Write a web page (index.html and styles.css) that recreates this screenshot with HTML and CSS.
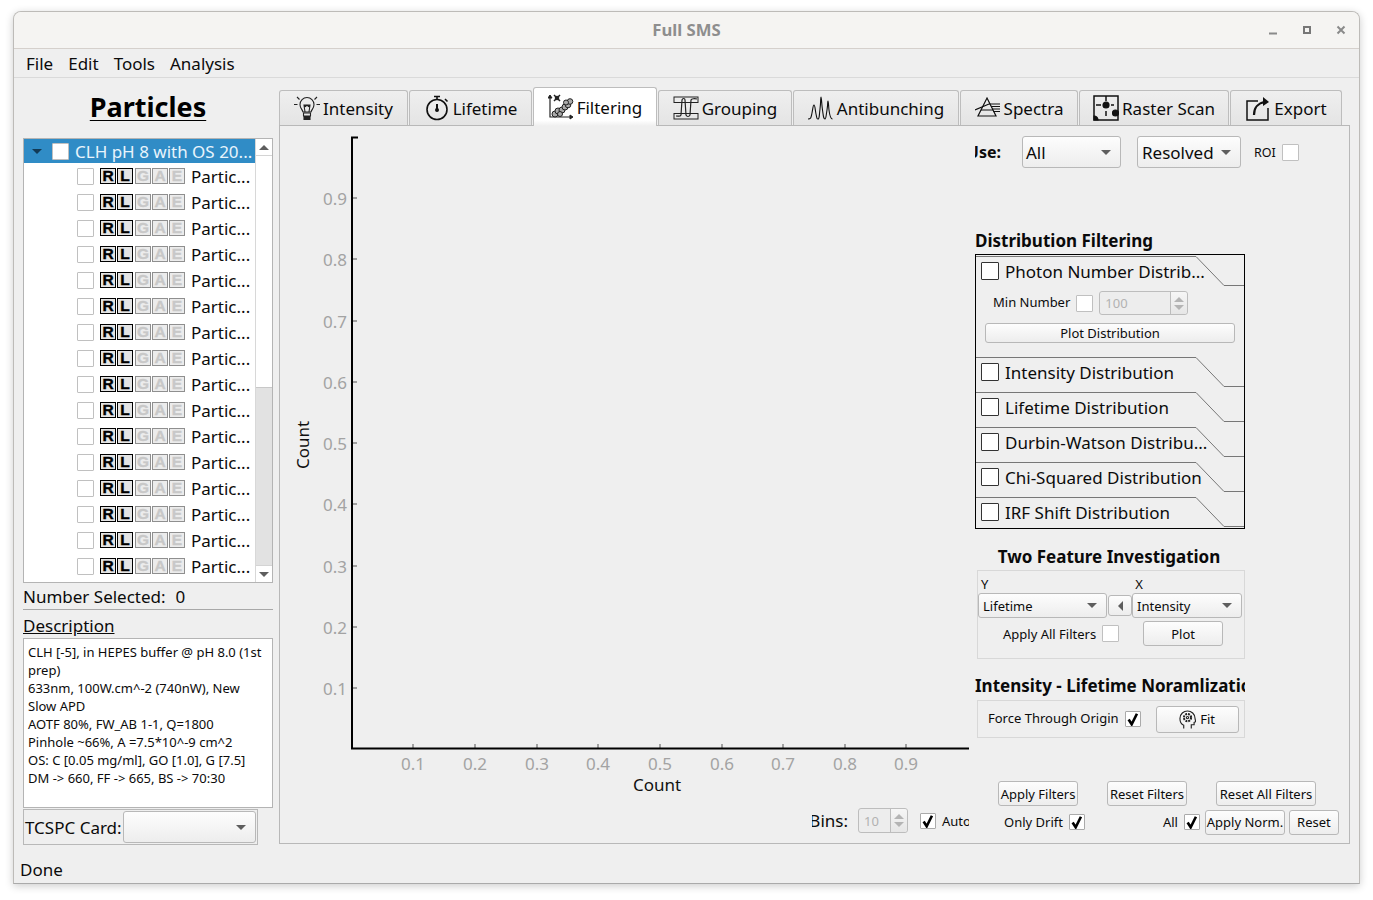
FILE: index.html
```html
<!DOCTYPE html>
<html lang="en">
<head>
  <meta charset="UTF-8">
  <title>Full SMS</title>
  <link rel="stylesheet" href="styles.css">
</head>
<body>
<div class="window">
  <div class="titlebar">
    <span class="title">Full SMS</span>
    <div class="win-btns">
      <svg viewBox="0 0 10 10"><path d="M1 8.500h8" stroke="#8a8a8a" stroke-width="2"/></svg>
      <svg viewBox="0 0 10 10"><rect x="2" y="2" width="6" height="6" fill="none" stroke="#777" stroke-width="2"/></svg>
      <svg viewBox="0 0 10 10"><path d="M1.500 1.500l7 7M8.500 1.500l-7 7" stroke="#8a8a8a" stroke-width="2"/></svg>
    </div>
  </div>
  <div class="menubar">
    <span>File</span><span>Edit</span><span>Tools</span><span>Analysis</span>
  </div>
  <div class="main">
    <!-- Particle list -->
    <div class="left">
      <h1 class="particles">Particles</h1>
      <div class="tree">
        <div class="tree-list">
          <div class="tree-head">
            <span class="caret-dark"></span>
            <span class="chk head-chk"></span>
            <span class="head-text">CLH pH 8 with OS 20...</span>
          </div>
          <div class="tree-row"><span class="chk"></span><span class="bd">R</span><span class="bd">L</span><span class="bd off">G</span><span class="bd off">A</span><span class="bd off">E</span><span class="row-text">Partic...</span></div>
          <div class="tree-row"><span class="chk"></span><span class="bd">R</span><span class="bd">L</span><span class="bd off">G</span><span class="bd off">A</span><span class="bd off">E</span><span class="row-text">Partic...</span></div>
          <div class="tree-row"><span class="chk"></span><span class="bd">R</span><span class="bd">L</span><span class="bd off">G</span><span class="bd off">A</span><span class="bd off">E</span><span class="row-text">Partic...</span></div>
          <div class="tree-row"><span class="chk"></span><span class="bd">R</span><span class="bd">L</span><span class="bd off">G</span><span class="bd off">A</span><span class="bd off">E</span><span class="row-text">Partic...</span></div>
          <div class="tree-row"><span class="chk"></span><span class="bd">R</span><span class="bd">L</span><span class="bd off">G</span><span class="bd off">A</span><span class="bd off">E</span><span class="row-text">Partic...</span></div>
          <div class="tree-row"><span class="chk"></span><span class="bd">R</span><span class="bd">L</span><span class="bd off">G</span><span class="bd off">A</span><span class="bd off">E</span><span class="row-text">Partic...</span></div>
          <div class="tree-row"><span class="chk"></span><span class="bd">R</span><span class="bd">L</span><span class="bd off">G</span><span class="bd off">A</span><span class="bd off">E</span><span class="row-text">Partic...</span></div>
          <div class="tree-row"><span class="chk"></span><span class="bd">R</span><span class="bd">L</span><span class="bd off">G</span><span class="bd off">A</span><span class="bd off">E</span><span class="row-text">Partic...</span></div>
          <div class="tree-row"><span class="chk"></span><span class="bd">R</span><span class="bd">L</span><span class="bd off">G</span><span class="bd off">A</span><span class="bd off">E</span><span class="row-text">Partic...</span></div>
          <div class="tree-row"><span class="chk"></span><span class="bd">R</span><span class="bd">L</span><span class="bd off">G</span><span class="bd off">A</span><span class="bd off">E</span><span class="row-text">Partic...</span></div>
          <div class="tree-row"><span class="chk"></span><span class="bd">R</span><span class="bd">L</span><span class="bd off">G</span><span class="bd off">A</span><span class="bd off">E</span><span class="row-text">Partic...</span></div>
          <div class="tree-row"><span class="chk"></span><span class="bd">R</span><span class="bd">L</span><span class="bd off">G</span><span class="bd off">A</span><span class="bd off">E</span><span class="row-text">Partic...</span></div>
          <div class="tree-row"><span class="chk"></span><span class="bd">R</span><span class="bd">L</span><span class="bd off">G</span><span class="bd off">A</span><span class="bd off">E</span><span class="row-text">Partic...</span></div>
          <div class="tree-row"><span class="chk"></span><span class="bd">R</span><span class="bd">L</span><span class="bd off">G</span><span class="bd off">A</span><span class="bd off">E</span><span class="row-text">Partic...</span></div>
          <div class="tree-row"><span class="chk"></span><span class="bd">R</span><span class="bd">L</span><span class="bd off">G</span><span class="bd off">A</span><span class="bd off">E</span><span class="row-text">Partic...</span></div>
          <div class="tree-row"><span class="chk"></span><span class="bd">R</span><span class="bd">L</span><span class="bd off">G</span><span class="bd off">A</span><span class="bd off">E</span><span class="row-text">Partic...</span></div>
        </div>
        <div class="vscroll">
          <div class="sb-btn"><span class="caret-up"></span></div>
          <div class="sb-track"></div>
          <div class="sb-thumb"></div>
          <div class="sb-btn sb-btn-low"><span class="caret"></span></div>
        </div>
      </div>
      <div class="selected"><span>Number Selected:</span><span>0</span></div>
      <div class="rule"></div>
      <div class="desc-label">Description</div>
      <div class="desc">CLH [-5], in HEPES buffer @ pH 8.0 (1st prep)<br>633nm, 100W.cm^-2 (740nW), New Slow APD<br>AOTF 80%, FW_AB 1-1, Q=1800<br>Pinhole ~66%, A =7.5*10^-9 cm^2<br>OS: C [0.05 mg/ml], GO [1.0], G [7.5]<br>DM -&gt; 660, FF -&gt; 665, BS -&gt; 70:30</div>
      <div class="tcspc">
        <span>TCSPC Card:</span>
        <div class="combo tcspc-combo"><span></span><i class="caret"></i></div>
      </div>
    </div>

    <!-- Tabs -->
    <div class="right">
      <div class="tabs">
        <div class="tab t-int">
          <svg class="ico" viewBox="0 0 26 26" fill="none" stroke="#222" stroke-width="1.100"><path d="M9 17c-1-3-3-4-3-7.500a7 7 0 0 1 14 0c0 3.500-2 4.500-3 7.500z"/><path d="M11 17l-1-7h6l-1 7M10 10l1.500 1.500L13 10l1.500 1.500L16 10"/><path d="M9.500 18h7v3h-7z"/><path d="M10 21.500h6v3h-6z" fill="#222"/><path d="M0 9.500h3.500M22.500 9.500H26M3 2l2.500 2.500M23 2l-2.500 2.500"/></svg>
          <span>Intensity</span>
        </div>
        <div class="tab t-life">
          <svg class="ico" viewBox="0 0 26 26" fill="none" stroke="#111" stroke-width="1.600"><circle cx="13" cy="14.500" r="10"/><path d="M10 1.500h6M13 1.500v3M21 4l2.500 2.500"/><path d="M13 9v6" stroke-width="2"/><circle cx="13" cy="15" r="1.200" fill="#111"/></svg>
          <span>Lifetime</span>
        </div>
        <div class="tab t-filt active">
          <svg class="ico" viewBox="0 0 26 26" fill="none" stroke="#222" stroke-width="1"><path d="M2 2v21h22" stroke-width="1.200"/><path d="M0 4l2-3 2 3zM22 21l3 2-3 2z" fill="#222"/><path d="M6 1l6 6M12 1l-6 6" stroke-width="1.500"/><circle cx="9" cy="4" r="1.800" fill="#222"/><g fill="#aaa"><circle cx="7" cy="20" r="3"/><circle cx="10" cy="17" r="3"/><circle cx="14" cy="16" r="3"/><circle cx="12" cy="20" r="2.500"/><circle cx="17" cy="13" r="3"/><circle cx="20" cy="11" r="2.800"/><circle cx="22" cy="7.500" r="2.800"/><circle cx="18" cy="8.500" r="2.500"/></g></svg>
          <span>Filtering</span>
        </div>
        <div class="tab t-grp">
          <svg class="ico ico-wide" viewBox="0 0 26 24" fill="none" stroke="#222" stroke-width="1"><rect x="1" y="1" width="24" height="5.500"/><rect x="1" y="17.500" width="24" height="5.500"/><path d="M3 20c3 0 4 1 5-1l1-15c.5-2 3-2 3 0l1 15c1 2 3 2 4 0l1-15c.5-1.500 4-1.500 6-1" stroke-width="1.200"/></svg>
          <span>Grouping</span>
        </div>
        <div class="tab t-anti">
          <svg class="ico" viewBox="0 0 26 26" fill="none" stroke="#111" stroke-width="1.100"><path d="M0 24c3 0 3-1 4-6s1-8 2-8 1 4 2 9 1 5 2 5c1.500 0 1-2 2-10s.5-12 1-12 .5 6 1.500 13 1 9 2.500 9c1 0 1-3 2-9s.5-9 1-9 .5 5 1 9 1 9 3.500 9"/></svg>
          <span>Antibunching</span>
        </div>
        <div class="tab t-spec">
          <svg class="ico" viewBox="0 0 26 26" fill="none" stroke="#111" stroke-width="1.200"><path d="M12 3l9 18H3z"/><path d="M0 15l14-6M14 9h11M16 11.500h9M17 14h8M18 16.500h7M6 15h12"/></svg>
          <span>Spectra</span>
        </div>
        <div class="tab t-rast">
          <svg class="ico" viewBox="0 0 26 26" fill="none" stroke="#111" stroke-width="1.200"><rect x="1" y="1" width="24" height="24" stroke-width="1.500"/><path d="M13 1v5M13 16v5M3 10h5M18 10h3" stroke-width="1.500"/><circle cx="13" cy="10" r="3" fill="#111"/><circle cx="22.500" cy="18" r="3" fill="#111"/><path d="M1 21a4 4 0 0 1 4 4H1z" fill="#111"/></svg>
          <span>Raster Scan</span>
        </div>
        <div class="tab t-exp">
          <svg class="ico" viewBox="0 0 26 26" fill="none" stroke="#111" stroke-width="1.500"><path d="M13 6H2v19h21v-12"/><path d="M9 20c0-7 4-12 11-13" stroke-width="2.200"/><path d="M18 2l6 5-6 4z" fill="#111" stroke="none"/></svg>
          <span>Export</span>
        </div>
      </div>

      <div class="page">
        <div class="plot-col">
          <svg class="plot" viewBox="280 126 689 674" width="689" height="674">
            <g class="ticks">
              <path d="M353 198h4M353 259h4M353 321h4M353 382h4M353 443h4M353 504h4M353 566h4M353 627h4M353 688h4"/>
              <path d="M413 748v-4M475 748v-4M537 748v-4M598 748v-4M660 748v-4M722 748v-4M783 748v-4M845 748v-4M906 748v-4"/>
            </g>
            <path class="axis" d="M358 137.500H352V748.500H969"/>
            <g class="tick-y">
              <text x="347" y="205">0.9</text>
              <text x="347" y="266">0.8</text>
              <text x="347" y="328">0.7</text>
              <text x="347" y="389">0.6</text>
              <text x="347" y="450">0.5</text>
              <text x="347" y="511">0.4</text>
              <text x="347" y="573">0.3</text>
              <text x="347" y="634">0.2</text>
              <text x="347" y="695">0.1</text>
            </g>
            <g class="tick-x">
              <text x="413" y="770">0.1</text>
              <text x="475" y="770">0.2</text>
              <text x="537" y="770">0.3</text>
              <text x="598" y="770">0.4</text>
              <text x="660" y="770">0.5</text>
              <text x="722" y="770">0.6</text>
              <text x="783" y="770">0.7</text>
              <text x="845" y="770">0.8</text>
              <text x="906" y="770">0.9</text>
            </g>
            <text class="axis-name" x="657" y="791">Count</text>
            <text class="axis-name" transform="translate(309 445) rotate(-90)">Count</text>
          </svg>
          <div class="bins">
            <div class="bins-label"><span>Bins:</span></div>
            <div class="spin bins-spin"><span>10</span><div class="spin-btns"><i class="caret-up light"></i><i class="caret light"></i></div></div>
            <span class="chk small-chk on"><svg viewBox="0 0 16 16"><path d="M3 8.500l3.500 5.500 6-12" fill="none" stroke="#000" stroke-width="3"/></svg></span>
            <span class="auto">Auto</span>
          </div>
        </div>

        <div class="side">
          <div class="use-row">
            <div class="use-label"><span>Use:</span></div>
            <div class="combo c-all"><span>All</span><i class="caret"></i></div>
            <div class="combo c-res"><span>Resolved</span><i class="caret"></i></div>
            <span class="roi">ROI</span>
            <span class="chk"></span>
          </div>

          <h3 class="sec sec-dist">Distribution Filtering</h3>
          <div class="toolbox">
            <div class="tb-head">
              <svg class="tb-line" viewBox="0 0 268 30" width="268" height="30"><path d="M0 .500H220L248 29.500H268"/></svg>
              <span class="chk dark"></span><span>Photon Number Distrib...</span>
            </div>
            <div class="tb-body">
              <div class="min-row">
                <span class="min-label">Min Number</span>
                <span class="chk"></span>
                <div class="spin min-spin"><span>100</span><div class="spin-btns"><i class="caret-up light"></i><i class="caret light"></i></div></div>
              </div>
              <div class="btn plot-dist">Plot Distribution</div>
            </div>
            <div class="tb-head">
              <svg class="tb-line" viewBox="0 0 268 30" width="268" height="30"><path d="M0 .500H220L248 29.500H268"/></svg>
              <span class="chk dark"></span><span>Intensity Distribution</span>
            </div>
            <div class="tb-head">
              <svg class="tb-line" viewBox="0 0 268 30" width="268" height="30"><path d="M0 .500H220L248 29.500H268"/></svg>
              <span class="chk dark"></span><span>Lifetime Distribution</span>
            </div>
            <div class="tb-head">
              <svg class="tb-line" viewBox="0 0 268 30" width="268" height="30"><path d="M0 .500H220L248 29.500H268"/></svg>
              <span class="chk dark"></span><span>Durbin-Watson Distribu...</span>
            </div>
            <div class="tb-head">
              <svg class="tb-line" viewBox="0 0 268 30" width="268" height="30"><path d="M0 .500H220L248 29.500H268"/></svg>
              <span class="chk dark"></span><span>Chi-Squared Distribution</span>
            </div>
            <div class="tb-head">
              <svg class="tb-line" viewBox="0 0 268 30" width="268" height="30"><path d="M0 .500H220L248 29.500H268"/></svg>
              <span class="chk dark"></span><span>IRF Shift Distribution</span>
            </div>
          </div>

          <h3 class="sec sec-two">Two Feature Investigation</h3>
          <div class="group two">
            <div class="two-labels"><span class="lbl-y">Y</span><span class="lbl-x">X</span></div>
            <div class="two-combos">
              <div class="combo c-y"><span>Lifetime</span><i class="caret"></i></div>
              <div class="btn swap"><i class="caret-left"></i></div>
              <div class="combo c-x"><span>Intensity</span><i class="caret"></i></div>
            </div>
            <div class="two-apply">
              <span>Apply All Filters</span>
              <span class="chk"></span>
              <div class="btn plot-btn">Plot</div>
            </div>
          </div>

          <h3 class="sec sec-norm">Intensity - Lifetime Noramlization</h3>
          <div class="group norm">
            <span class="force-label">Force Through Origin</span>
            <span class="chk small-chk on"><svg viewBox="0 0 16 16"><path d="M3 8.500l3.500 5.500 6-12" fill="none" stroke="#000" stroke-width="3"/></svg></span>
            <div class="btn fit-btn">
              <svg viewBox="0 0 18 20" width="17" height="19" fill="none" stroke="#222" stroke-width="1.200"><path d="M5 19.500v-3.500c-3-1-4-4-4-7 0-5 4-8 8-8s8 3 8 8c0 1 1 3 .5 3.500l-1.500.5v2.500h-3v4"/><circle cx="9" cy="8" r="3.800" stroke-dasharray="2 1" stroke-width="2.200"/><circle cx="9" cy="8" r="1.200"/></svg>
              <span>Fit</span>
            </div>
          </div>

          <div class="act-row1">
            <div class="btn b-apply">Apply Filters</div>
            <div class="btn b-reset">Reset Filters</div>
            <div class="btn b-all">Reset All Filters</div>
          </div>
          <div class="act-row2">
            <span class="l-drift">Only Drift</span>
            <span class="chk small-chk on"><svg viewBox="0 0 16 16"><path d="M3 8.500l3.500 5.500 6-12" fill="none" stroke="#000" stroke-width="3"/></svg></span>
            <span class="l-all">All</span>
            <span class="chk small-chk on"><svg viewBox="0 0 16 16"><path d="M3 8.500l3.500 5.500 6-12" fill="none" stroke="#000" stroke-width="3"/></svg></span>
            <div class="btn b-norm">Apply Norm.</div>
            <div class="btn b-res">Reset</div>
          </div>
        </div>
      </div>
    </div>
  </div>
  <div class="status">Done</div>
</div>
</body>
</html>
```

FILE: styles.css
```css
* { box-sizing: border-box; }
html, body { margin: 0; padding: 0; background: #fff; }
body { font-family: "Noto Sans", sans-serif; color: #0b0b0b; height: 900px; overflow: hidden; }

.window {
  width: 1347px;
  height: 873px;
  margin: 11px 0 0 13px;
  background: #efefef;
  border: 1px solid #bdbbb8;
  border-bottom-color: #aaa;
  border-radius: 8px 8px 0 0;
  box-shadow: 0 2px 8px #0003;
  display: flex;
  flex-direction: column;
  overflow: hidden;
}
.titlebar {
  height: 37px;
  flex: none;
  padding-bottom: 2px;
  background: #f5f4f2;
  border-bottom: 1px solid #d5d0cc;
  display: flex;
  align-items: center;
  justify-content: center;
  position: relative;
}
.title { font-weight: 700; font-size: 16.700px; color: #8e8e8e; }
.win-btns { position: absolute; right: 13px; top: 13px; display: flex; gap: 24px; }
.win-btns svg { width: 10px; height: 10px; }

.menubar {
  height: 29px;
  flex: none;
  border-bottom: 1px solid #dadada;
  display: flex;
  align-items: center;
  gap: 15px;
  padding-left: 12px;
  font-size: 17px;
}

.main { flex: none; height: 767px; display: flex; padding: 0 0 0 9px; }

/* left column */
.left { width: 250px; flex: none; display: flex; flex-direction: column; }
.particles {
  margin: 11px 0 0;
  height: 49px;
  font-size: 27px;
  line-height: 36px;
  font-weight: 700;
  text-align: center;
  text-decoration: underline;
  text-decoration-thickness: 1px;
  text-underline-offset: 3px;
  color: #000;
}
.tree {
  height: 445px;
  border: 1px solid #b4b4b4;
  background: #fff;
  display: flex;
  flex: none;
}
.tree-list { width: 231px; flex: none; }
.tree-head {
  height: 24px;
  background: #308cc6;
  display: flex;
  align-items: center;
  color: #e8f4fc;
  font-size: 17px;
  padding-left: 8px;
  white-space: nowrap;
}
.caret-dark { width: 0; height: 0; border: 5px solid transparent; border-top: 5px solid #123a56; border-bottom: 0; margin-right: 10px; }
.head-chk { margin-right: 6px; width: 17px; height: 17px; }
.tree-row {
  height: 26px;
  display: flex;
  align-items: center;
  padding-left: 53px;
  font-size: 17px;
}
.tree-row .chk { margin-right: 6px; }
.row-text { margin-left: 5px; white-space: nowrap; }

.chk {
  display: inline-flex;
  align-items: center;
  justify-content: center;
  width: 17px;
  height: 17px;
  background: #fff;
  border: 1px solid #c0c0c0;
  border-radius: 1px;
  flex: none;
}
.chk.dark { width: 18px; height: 18px; border: 1px solid #333; }
.small-chk { width: 16px; height: 16px; border-color: #aaa; }
.small-chk svg { width: 14px; height: 14px; }

.bd {
  width: 16px;
  height: 16px;
  margin-right: 1px;
  border: 1px solid #000;
  background: #e4e4e4;
  font-family: "Liberation Sans", sans-serif;
  font-weight: 700;
  font-size: 15.500px;
  line-height: 14px;
  text-align: center;
  color: #000;
  flex: none;
  -webkit-text-stroke: .4px currentColor;
}
.bd.off { border-color: #8f8f8f; color: #c8c8c8; background: #ececec; }
.bd.off:nth-of-type(4) { margin-left: 1px; }

.vscroll { flex: 1; border-left: 1px solid #d8d8d8; display: flex; flex-direction: column; background: #fff; }
.sb-btn { height: 17px; flex: none; border-bottom: 1px solid #d4d4d4; display: flex; align-items: center; justify-content: center; }
.sb-btn-low { border-bottom: 0; border-top: 1px solid #d4d4d4; }
.sb-track { height: 231px; flex: none; }
.sb-thumb { flex: 1; background: #e2e2e2; border-top: 1px solid #c8c8c8; }

.caret { display: inline-block; width: 0; height: 0; border-left: 5px solid transparent; border-right: 5px solid transparent; border-top: 5px solid #5e5e5e; }
.caret-up { display: inline-block; width: 0; height: 0; border-left: 5px solid transparent; border-right: 5px solid transparent; border-bottom: 5px solid #5e5e5e; }
.caret-left { display: inline-block; width: 0; height: 0; border-top: 5px solid transparent; border-bottom: 5px solid transparent; border-right: 5px solid #5e5e5e; }
.caret.light { border-top-color: #b4b4b4; }
.caret-up.light { border-bottom-color: #b4b4b4; }

.selected { height: 26px; flex: none; font-size: 17px; display: flex; gap: 10px; align-items: center; }
.rule { height: 1px; background: #a8a8a8; flex: none; }
.desc-label { height: 28px; flex: none; font-size: 17px; line-height: 31px; text-decoration: underline; }
.desc {
  height: 170px;
  flex: none;
  background: #fff;
  border: 1px solid #b4b4b4;
  padding: 4px 4px;
  font-size: 13px;
  line-height: 18px;
}
.tcspc {
  width: 235px;
  height: 36px;
  margin-top: 1px;
  flex: none;
  border: 1px solid #b8b8b8;
  display: flex;
  align-items: center;
  padding-left: 1px;
  font-size: 17px;
  white-space: nowrap;
}
.tcspc-combo { width: 133px; height: 32px; margin-left: 1px; }

.combo {
  display: flex;
  align-items: center;
  justify-content: space-between;
  background: linear-gradient(#fdfdfd, #ededed);
  border: 1px solid #b8b8b8;
  border-radius: 3px;
  padding: 0 9px 0 4px;
  flex: none;
}

/* tabs */
.right { width: 1071px; margin-left: 6px; flex: none; display: flex; flex-direction: column; padding-top: 10px; }
.tabs { height: 37px; flex: none; display: flex; align-items: flex-end; position: relative; z-index: 1; }
.tab {
  height: 35px;
  margin-right: 1px;
  display: flex;
  align-items: center;
  justify-content: center;
  gap: 3px;
  background: linear-gradient(#efefef, #e4e4e4);
  border: 1px solid #bdbdbd;
  border-bottom: 0;
  border-radius: 3px 3px 0 0;
  font-size: 17px;
  flex: none;
}
.tab.active { height: 39px; margin-bottom: -1px; background: linear-gradient(#fff, #fff 85%, #efefef); }
.t-int { width: 129px; }
.t-life { width: 123px; }
.t-filt { width: 124px; }
.t-grp { width: 134px; }
.t-anti { width: 166px; }
.t-spec { width: 118px; }
.t-rast { width: 150px; }
.t-exp { width: 112px; }
.ico { width: 26px; height: 26px; flex: none; }
.ico-wide { height: 24px; }

.page {
  height: 719px;
  flex: none;
  border: 1px solid #b8b8b8;
  display: flex;
  background: #efefef;
}
.plot-col { width: 689px; flex: none; overflow: hidden; }
.plot { display: block; }
.axis { fill: none; stroke: #000; stroke-width: 2; }
.ticks path { stroke: #888; stroke-width: 1.500; fill: none; }
.tick-y text { text-anchor: end; font-size: 17px; fill: #a3a3a3; }
.tick-x text { text-anchor: middle; font-size: 17px; fill: #a3a3a3; }
.axis-name { text-anchor: middle; font-size: 17px; fill: #111; }

.bins { display: flex; align-items: center; height: 25px; margin-top: 8px; padding-left: 532px; font-size: 13px; white-space: nowrap; }
.bins-label { width: 36px; font-size: 17px; overflow: hidden; display: flex; justify-content: flex-end; flex: none; }
.bins-label span { flex: none; }
.spin {
  display: flex;
  align-items: center;
  justify-content: space-between;
  border: 1px solid #bdbdbd;
  border-radius: 3px;
  background: #ededed;
  color: #b2b2b2;
  font-size: 13px;
  padding-left: 5px;
  flex: none;
}
.spin-btns { align-self: stretch; width: 17px; border-left: 1px solid #bdbdbd; display: flex; flex-direction: column; align-items: center; justify-content: center; gap: 3px; background: linear-gradient(#f6f6f6, #e6e6e6); border-radius: 0 3px 3px 0; }
.bins-spin { width: 50px; height: 25px; margin-left: 10px; }
.bins .chk { margin-left: 12px; }
.auto { margin-left: 6px; }

/* side panel */
.side { width: 370px; margin-left: 6px; flex: none; overflow: hidden; }
.use-row { display: flex; align-items: center; height: 32px; margin-top: 10px; }
.use-label { width: 26px; overflow: hidden; display: flex; justify-content: flex-end; font-weight: 700; font-size: 16px; flex: none; }
.use-label span { flex: none; }
.c-all { width: 99px; height: 32px; margin-left: 21px; padding-left: 3px; font-size: 17px; }
.c-res { width: 104px; height: 32px; margin-left: 16px; font-size: 17px; }
.roi { margin-left: 13px; font-size: 12.500px; }
.use-row .chk { margin-left: 6px; }

.sec { margin: 0; font-size: 17px; font-weight: 700; white-space: nowrap; color: #0a0a0a; }
.sec-dist { margin-top: 60px; height: 26px; line-height: 26px; }
.toolbox { width: 270px; height: 275px; border: 1px solid #000; padding-top: 1px; overflow: hidden; }
.tb-head {
  position: relative;
  height: 30px;
  margin-bottom: 5px;
  display: flex;
  align-items: center;
  gap: 6px;
  padding-left: 5px;
  font-size: 17px;
  white-space: nowrap;
}
.tb-line { position: absolute; left: 0; top: 0; }
.tb-line path { fill: none; stroke: #777; stroke-width: 1; }
.tb-body { height: 66px; padding: 0 9px; font-size: 13px; }
.min-row { display: flex; align-items: center; height: 24px; padding-left: 8px; }
.min-label { margin-bottom: 2px; }
.min-row .chk { margin-left: 6px; }
.min-spin { width: 89px; height: 24px; margin-left: 6px; }
.btn {
  display: flex;
  align-items: center;
  justify-content: center;
  background: linear-gradient(#fdfdfd, #ededed);
  border: 1px solid #b8b8b8;
  border-radius: 3px;
  font-size: 13px;
  flex: none;
  white-space: nowrap;
}
.plot-dist { height: 20px; margin-top: 8px; }

.sec-two { margin-top: 15px; height: 26px; line-height: 26px; text-align: center; width: 268px; }
.group { border: 1px solid #d8d8d8; margin-left: 2px; width: 268px; font-size: 13px; }
.two { height: 89px; }
.two-labels { display: flex; height: 22px; padding: 4px 0 0 3px; line-height: 18px; }
.lbl-x { margin-left: 147px; }
.two-combos { display: flex; height: 25px; }
.c-y { width: 129px; height: 25px; }
.c-x { width: 110px; height: 25px; }
.swap { width: 24px; height: 21px; margin: 2px 0 0 1px; }
.two-apply { display: flex; align-items: center; margin-top: 3px; padding-left: 25px; }
.two-apply .chk { margin-left: 6px; }
.plot-btn { width: 80px; height: 25px; margin-left: 24px; }

.sec-norm { margin-top: 14px; height: 27px; line-height: 25px; width: 270px; overflow: hidden; }
.norm { height: 38px; display: flex; align-items: center; padding-left: 10px; }
.force-label { margin-bottom: 2px; }
.norm .chk { margin-left: 6px; }
.fit-btn { width: 83px; height: 27px; margin-left: 15px; gap: 4px; }

.act-row1 { display: flex; margin: 43px 0 0 23px; height: 25px; }
.b-apply { width: 80px; height: 25px; }
.b-reset { width: 80px; height: 25px; margin-left: 29px; }
.b-all { width: 100px; height: 25px; margin-left: 29px; }
.act-row2 { display: flex; align-items: center; margin: 3px 0 0 29px; height: 26px; font-size: 13px; }
.act-row2 .chk { margin-left: 6px; }
.l-all { margin-left: 78px; }
.b-norm { width: 80px; height: 25px; margin-left: 5px; }
.b-res { width: 50px; height: 25px; margin-left: 4px; }

.status { flex: 1; display: flex; align-items: center; padding: 11px 0 0 6px; font-size: 17px; }
```
